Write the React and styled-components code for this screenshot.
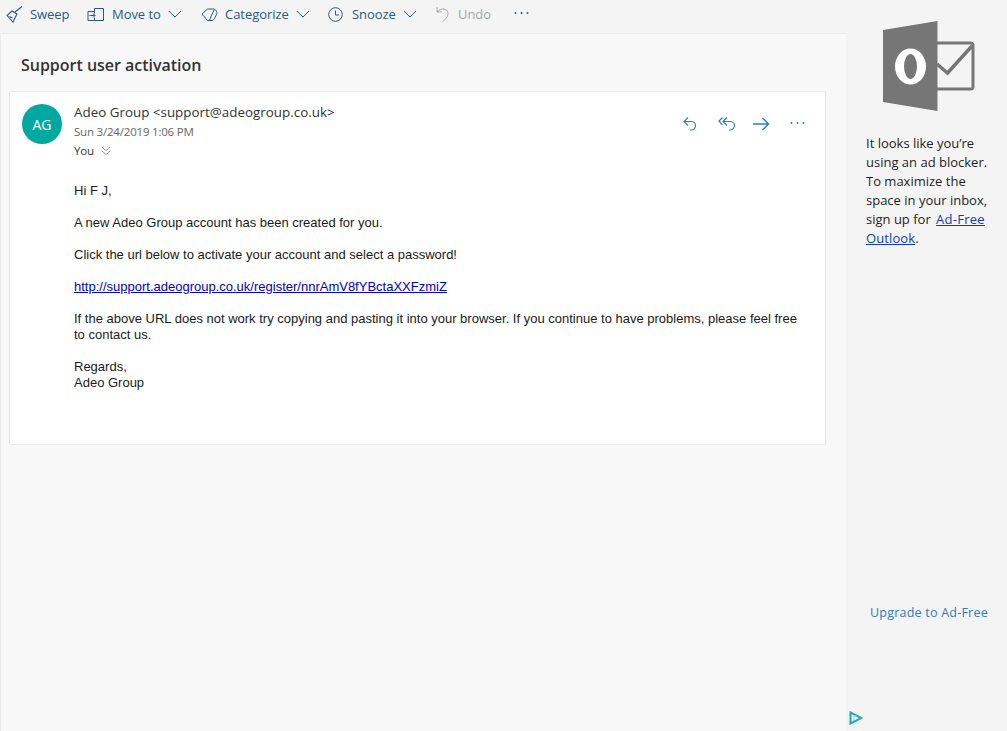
import styled, { createGlobalStyle } from 'styled-components';

const GlobalStyle = createGlobalStyle`
  html, body {
    margin: 0;
    padding: 0;
    height: 100%;
    overflow: hidden;
    background: #f4f4f4;
  }
  #root {
    height: 100%;
  }
`;

const uiFont = `'Open Sans', 'Noto Sans', sans-serif`;

const Page = styled.div`
  display: flex;
  width: 1007px;
  height: 731px;
  font-family: ${uiFont};
`;

const MainColumn = styled.div`
  width: 846px;
  display: flex;
  flex-direction: column;
`;

const Toolbar = styled.div`
  height: 33px;
  box-sizing: border-box;
  display: flex;
  align-items: center;
  padding: 0 0 5px 6px;
  background: #f4f4f4;
`;

const ToolButton = styled.div`
  display: flex;
  align-items: center;
  width: ${(p) => p.$width}px;
  flex-shrink: 0;
  font-size: 13px;
  letter-spacing: -0.05px;
  color: ${(p) => (p.$disabled ? '#a6a6a6' : '#2a5885')};
  svg {
    flex-shrink: 0;
    display: block;
  }
  span {
    margin-left: ${(p) => p.$gap || 6}px;
  }
`;

const Chevron = styled.svg`
  margin-left: 7px;
`;

const ReadingPane = styled.div`
  flex: 1;
  background: #f8f8f8;
  border-top: 1px solid #ebebeb;
  border-left: 1px solid #ebebeb;
  padding: 0 20px 0 8px;
`;

const Subject = styled.h1`
  margin: 0;
  padding: 20px 0 0 12px;
  height: 57px;
  box-sizing: border-box;
  font-size: 16px;
  line-height: 22px;
  font-weight: 600;
  letter-spacing: -0.02px;
  color: #333333;
`;

const MessageCard = styled.div`
  width: 817px;
  height: 354px;
  box-sizing: border-box;
  background: #ffffff;
  border: 1px solid #eaeaea;
  border-radius: 2px;
  padding: 12px 20px 0 12px;
`;

const MessageHeader = styled.div`
  display: flex;
  height: 55px;
`;

const Avatar = styled.div`
  width: 40px;
  height: 40px;
  border-radius: 50%;
  background: #00a8a0;
  color: #ffffff;
  font-size: 14px;
  display: flex;
  align-items: center;
  justify-content: center;
  flex-shrink: 0;
`;

const SenderBlock = styled.div`
  margin-left: 12px;
  flex: 1;
  margin-top: -2px;
`;

const SenderName = styled.div`
  font-size: 13.4px;
  line-height: 21px;
  color: #333333;
`;

const SentDate = styled.div`
  font-size: 11.5px;
  line-height: 18px;
  letter-spacing: -0.2px;
  color: #666666;
`;

const Recipients = styled.div`
  display: flex;
  align-items: center;
  font-size: 11.5px;
  line-height: 20px;
  letter-spacing: -0.2px;
  color: #333333;
  svg {
    margin-left: 7px;
  }
`;

const Actions = styled.div`
  display: grid;
  grid-template-columns: 35px 35px 37px 15px;
  align-items: start;
  padding-top: 13px;
  svg {
    display: block;
  }
`;

const Body = styled.div`
  margin-left: 52px;
  padding-top: 24px;
  font-family: 'Liberation Sans', Arial, sans-serif;
  font-size: 13px;
  line-height: 16px;
  color: #1a1a1a;
  p {
    margin: 0 0 16px;
  }
  a {
    color: #0000cc;
    text-decoration: underline;
  }
`;

const Sidebar = styled.div`
  width: 161px;
  box-sizing: border-box;
  background: #f4f4f4;
  display: flex;
  flex-direction: column;
  padding: 20px 0 0 21px;
`;

const Logo = styled.svg`
  display: block;
  margin-left: 16px;
`;

const AdText = styled.p`
  margin: 22px 0 0 -1px;
  font-size: 13px;
  line-height: 19px;
  letter-spacing: 0;
  color: #1f1f1f;
  white-space: pre-line;
`;

const AdLink = styled.a`
  color: #0f3bb5;
  text-decoration: underline;
  letter-spacing: ${(p) => p.$spacing || 0}px;
  margin-left: ${(p) => p.$indent || 0}px;
`;

const UpgradeLink = styled.div`
  margin-top: 356px;
  margin-left: 3px;
  font-size: 12.5px;
  line-height: 18px;
  letter-spacing: 0.22px;
  color: #2b7cc4;
`;

const AdChoices = styled.svg`
  display: block;
  margin-top: 89px;
  margin-left: -18px;
`;

const ChevronDown = () => (
  <Chevron width="14" height="8" viewBox="0 0 14 8" fill="none" stroke="#2a5885" strokeWidth="1">
    <path d="M1 1l6 6 6-6" />
  </Chevron>
);

const blue = '#2f7ec8';

const App = () => {
  return (
    <Page>
      <GlobalStyle />
      <MainColumn>
        <Toolbar>
          <ToolButton $width={81} $gap={7}>
            <svg width="17" height="17" viewBox="0 0 17 17" fill="none" stroke="#2a5885" strokeWidth="1.100">
              <path d="M1 9.500L7 16l4-8-5-3z" />
              <path d="M3.500 10.500l3 1.500M9 6l7-5.500" />
            </svg>
            <span>Sweep</span>
          </ToolButton>
          <ToolButton $width={114} $gap={8}>
            <svg width="17" height="13" viewBox="0 0 17 13" fill="none" stroke="#2a5885" strokeWidth="1">
              <path d="M1 3.500h6.500V.5h9v12H1z" />
              <path d="M7.500 3.500V5.500M7.500 9.500v3M2.500 7.500h5.500M6 5.500l2 2-2 2" />
            </svg>
            <span>Move to</span>
            <ChevronDown />
          </ToolButton>
          <ToolButton $width={127} $gap={7}>
            <svg width="17" height="13" viewBox="0 0 17 13" fill="none" stroke="#2a5885" strokeWidth="1">
              <path d="M1 6L6.500 1H12c3 0 4.500 3 3.500 5.500L13.500 10.500c-.5 1-1.500 2-2.500 2H6.500z" />
              <path d="M13 2L8.500 12" />
            </svg>
            <span>Categorize</span>
            <ChevronDown />
          </ToolButton>
          <ToolButton $width={108} $gap={9}>
            <svg width="15" height="15" viewBox="0 0 15 15" fill="none" stroke="#2a5885" strokeWidth="1">
              <circle cx="7.500" cy="7.500" r="6.800" />
              <path d="M7.500 3.500v4.500h3.500" />
            </svg>
            <span>Snooze</span>
            <ChevronDown />
          </ToolButton>
          <ToolButton $width={78} $disabled $gap={9}>
            <svg width="13" height="16" viewBox="0 0 13 16" fill="none" stroke="#a6a6a6" strokeWidth="1">
              <path d="M1 1v5h5M1 6c2-2 4-3 6-3 3 0 5 2 5 4.500 0 3-2 5-5 8" />
            </svg>
            <span>Undo</span>
          </ToolButton>
          <ToolButton $width={20}>
            <svg width="15" height="4" viewBox="0 0 15 4" fill="#2a5885">
              <circle cx="1.500" cy="1" r="1" />
              <circle cx="7.500" cy="1" r="1" />
              <circle cx="13.500" cy="1" r="1" />
            </svg>
          </ToolButton>
        </Toolbar>
        <ReadingPane>
          <Subject>Support user activation</Subject>
          <MessageCard>
            <MessageHeader>
              <Avatar>AG</Avatar>
              <SenderBlock>
                <SenderName>Adeo Group &lt;support@adeogroup.co.uk&gt;</SenderName>
                <SentDate>Sun 3/24/2019 1:06 PM</SentDate>
                <Recipients>
                  You
                  <svg width="10" height="10" viewBox="0 0 10 10" fill="none" stroke="#8a8a8a" strokeWidth="0.9">
                    <path d="M1 1l4 3.500L9 1M1 5l4 3.500L9 5" />
                  </svg>
                </Recipients>
              </SenderBlock>
              <Actions>
                <svg width="14" height="14" viewBox="0 0 14 14" fill="none" stroke={blue} strokeWidth="1.200">
                  <path d="M5 .5L1 4.500l4 4M1 4.500h7.500c2.300 0 4 1.800 4 4s-1.700 4.500-4 4.500H7" />
                </svg>
                <svg width="18" height="14" viewBox="0 0 18 14" fill="none" stroke={blue} strokeWidth="1.200">
                  <path d="M4.500 .5L1 4l3.500 4M9 .5L5 4.500l4 4M5 4.500h7c2.500 0 4.500 1.800 4.500 4s-2 4.500-4.500 4.500h-1" />
                </svg>
                <svg width="17" height="14" viewBox="0 0 17 14" fill="none" stroke={blue} strokeWidth="1.500">
                  <path d="M0 7h15.500M9.500 1l6 6-6 6" />
                </svg>
                <svg width="15" height="14" viewBox="0 0 15 14" fill={blue}>
                  <circle cx="1.500" cy="6" r="1" />
                  <circle cx="7.500" cy="6" r="1" />
                  <circle cx="13.500" cy="6" r="1" />
                </svg>
              </Actions>
            </MessageHeader>
            <Body>
              <p>Hi F J,</p>
              <p>A new Adeo Group account has been created for you.</p>
              <p>Click the url below to activate your account and select a password!</p>
              <p>
                <a href="#activate">http://support.adeogroup.co.uk/register/nnrAmV8fYBctaXXFzmiZ</a>
              </p>
              <p>
                If the above URL does not work try copying and pasting it into your browser. If you continue to have
                problems, please feel free to contact us.
              </p>
              <p>
                Regards,
                <br />
                Adeo Group
              </p>
            </Body>
          </MessageCard>
        </ReadingPane>
      </MainColumn>
      <Sidebar>
        <Logo width="92" height="92" viewBox="0 0 92 92">
          <path d="M0 10L54.500 1v90L0 82z" fill="#767676" />
          <path d="M54 23h34c1 0 2 1 2 2v42c0 1-1 2-2 2H54" fill="none" stroke="#767676" strokeWidth="3" />
          <path d="M54 44l10.500 9L89 26" fill="none" stroke="#767676" strokeWidth="3.500" />
          <ellipse cx="27.500" cy="46.500" rx="15.500" ry="18" fill="#ffffff" />
          <ellipse cx="27.500" cy="46.500" rx="6.500" ry="12.500" fill="#767676" />
        </Logo>
        <AdText>
          {'It looks like you\u2019re\nusing an ad blocker.\nTo maximize the\nspace in your inbox,\nsign up for '}
          <AdLink href="#adfree" $indent={2} $spacing={0.25}>Ad-Free</AdLink>
          {'\n'}
          <AdLink href="#adfree" $spacing={0.1}>Outlook</AdLink>.
        </AdText>
        <UpgradeLink>Upgrade to Ad-Free</UpgradeLink>
        <AdChoices width="14" height="14" viewBox="0 0 14 14" fill="none">
          <path d="M1.500 1.500L12.500 7 1.500 12.500z" stroke="#1ea6c4" strokeWidth="2" />
          <path d="M5 5h2.500M5 5v4" stroke="#9ad5e2" strokeWidth="1" />
        </AdChoices>
      </Sidebar>
    </Page>
  );
};

export default App;
